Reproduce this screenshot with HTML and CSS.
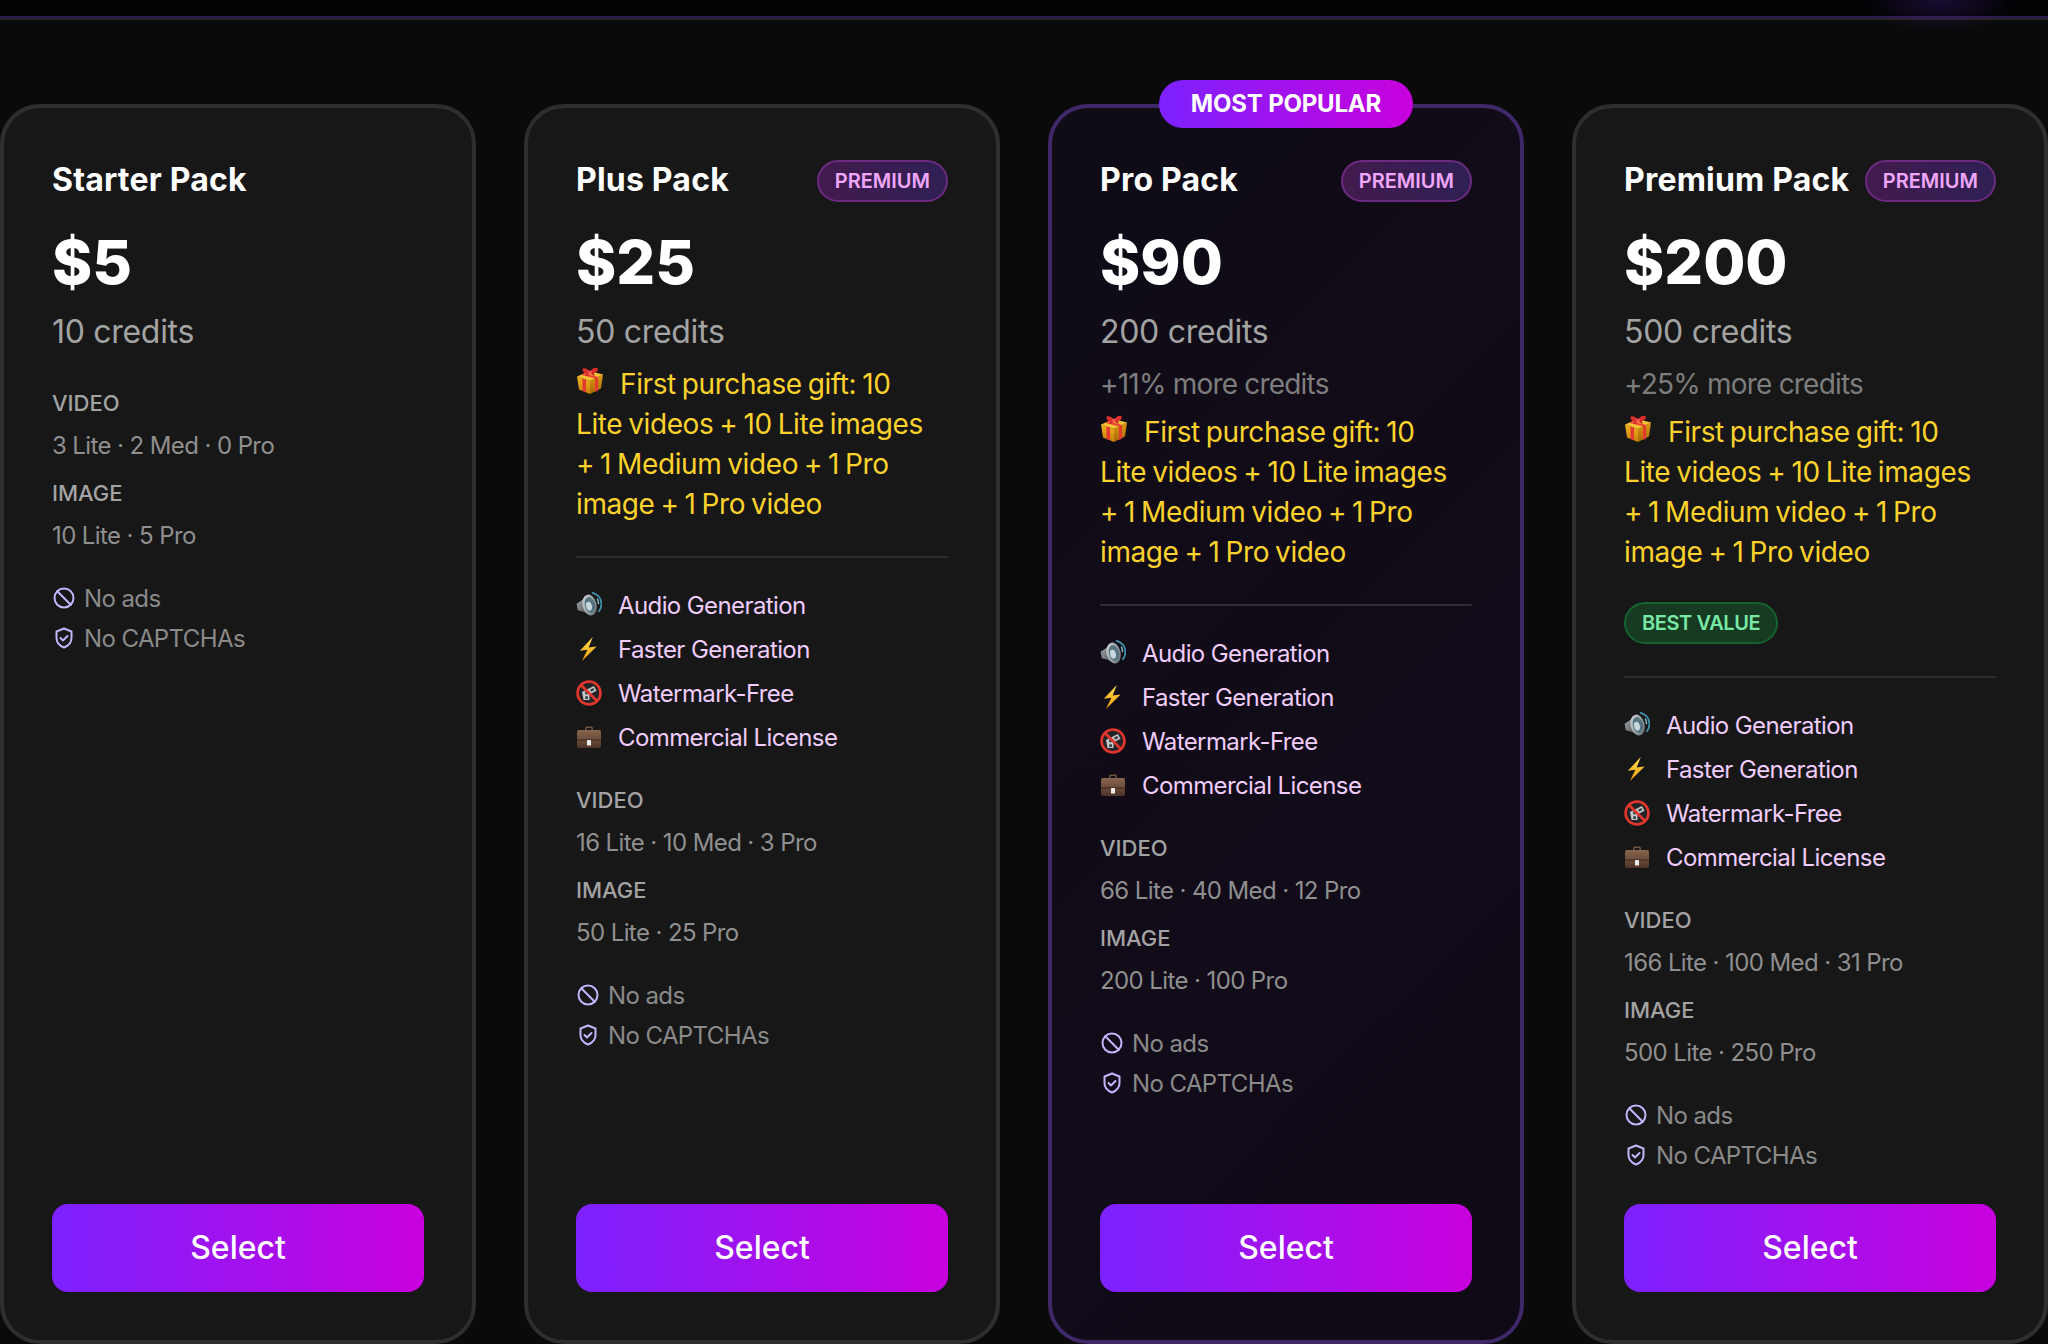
FILE: index.html
```html
<!DOCTYPE html>
<html lang="en">
<head>
  <meta charset="UTF-8" />
  <meta name="viewport" content="width=device-width, initial-scale=1.0"/>
  <title>Credit Packs</title>
  <link rel="stylesheet" href="styles.css">
</head>
<body>
  <svg class="sprites" width="0" height="0" aria-hidden="true">
    <defs>
      <linearGradient id="goldL" x1="0" y1="0" x2="0" y2="1"><stop offset="0" stop-color="#f2b21c"/><stop offset="1" stop-color="#c77f0c"/></linearGradient>
      <linearGradient id="goldR" x1="0" y1="0" x2="0" y2="1"><stop offset="0" stop-color="#dd9a14"/><stop offset="1" stop-color="#a9660a"/></linearGradient>
      <linearGradient id="metal" x1="0" y1="0" x2="1" y2="1"><stop offset="0" stop-color="#a9afb4"/><stop offset="1" stop-color="#3c4145"/></linearGradient>
      <linearGradient id="rim" x1="0" y1="0" x2="1" y2="1"><stop offset="0" stop-color="#d9dde0"/><stop offset="1" stop-color="#5d6468"/></linearGradient>
      <linearGradient id="leather" x1="0" y1="0" x2="0" y2="1"><stop offset="0" stop-color="#8a6650"/><stop offset="1" stop-color="#4d3427"/></linearGradient>
      <linearGradient id="bolt" x1="0" y1="0" x2="0" y2="1"><stop offset="0" stop-color="#ffe14d"/><stop offset="1" stop-color="#f59a0a"/></linearGradient>
    </defs>
    <symbol id="i-gift" viewBox="0 0 28 28">
      <path d="M1 9.500 14 14v13L3 22.500z" fill="url(#goldL)"/>
      <path d="M27 7.500 14 14v13l11-5.500z" fill="url(#goldR)"/>
      <path d="M1 9.500 13.500 4 27 7.500 14 14z" fill="#f6c433"/>
      <path d="M6.500 11.400 10 12.600v12.700l-3.500-1.600zM19 11.600l3-1.600v13.400l-3 1.600z" fill="#e5392f"/>
      <path d="M5 7.700 8.500 6l13.500 4-3 1.600z" fill="#ee4438"/>
      <path d="M14 6.500C10 7 6 5.500 6.500 2.600 7 .4 11.500 1 14 5 16 1 21-.4 21.800 2 22.500 5 18 6.800 14 6.500z" fill="#dd2f2f"/>
      <path d="M14 6.500 9.500 9.600l1.200-3.400zM14 6.500l5 2.400-1.400-3.300z" fill="#b81f27"/>
      <circle cx="14" cy="5.400" r="1.900" fill="#f2574c"/>
    </symbol>
    <symbol id="i-speaker" viewBox="1 1 22 22">
      <path d="M1.500 11 6.500 7.500 12 3 14 21 8 18 2.500 16.500z" fill="url(#metal)"/>
      <ellipse cx="12.500" cy="12" rx="6" ry="9" transform="rotate(-14 12.500 12)" fill="url(#rim)"/>
      <ellipse cx="12.800" cy="12" rx="4.200" ry="6.800" transform="rotate(-14 12.800 12)" fill="#54747f"/>
      <ellipse cx="12" cy="13" rx="2.400" ry="3.800" transform="rotate(-14 12 13)" fill="#c8d8de"/>
      <path d="M14.500 1.500c4.500 1.500 8 5 8 9.500 0 2.500-.8 4.800-2.500 6.800" fill="none" stroke="#3e8fa3" stroke-width="1.500"/>
      <path d="M19 6.500c.8 1.500 1.200 3 1.100 4.800" fill="none" stroke="#7dbccb" stroke-width="1.300"/>
    </symbol>
    <symbol id="i-bolt" viewBox="0 0 24 24">
      <path d="M15.500 1 3.500 13.500l7-.8L5.500 23 19 9.800l-7.300.8z" fill="url(#bolt)"/>
    </symbol>
    <symbol id="i-nocam" viewBox="0 0 24 24">
      <circle cx="12" cy="12" r="10.600" fill="#242426" stroke="#e2352c" stroke-width="2.400"/>
      <path d="M5.500 11 16.500 5.500l2.500 4.500-6.500 3.400v5H7z" fill="#c3c7cb"/>
      <path d="M8 11.200l3-1.500 1.200 2.300-3 1.500zM13 8.800l3-1.500 1 2-3 1.500zM8.500 15h2.500v2.500H8.500z" fill="#3b3f43"/>
      <path d="M4.800 4.800 19.500 19.500" stroke="#e2352c" stroke-width="2.600"/>
    </symbol>
    <symbol id="i-case" viewBox="0 0 26 24">
      <path d="M9 6V3.200C9 2 10 1.500 11 1.500h4c1 0 2 .5 2 1.700V6h-1.600V3.100h-4.800V6z" fill="#6d5140"/>
      <rect x="1" y="5" width="24" height="18" rx="2" fill="url(#leather)"/>
      <path d="M1 14.500h24v1H1z" fill="#3a261b"/>
      <rect x="11" y="15" width="4" height="5.500" rx=".6" fill="#ececec"/>
    </symbol>
    <symbol id="i-ban" viewBox="0 0 24 24">
      <circle cx="12" cy="12" r="9.500"/>
      <path d="m5.300 5.300 13.400 13.400"/>
    </symbol>
    <symbol id="i-shield" viewBox="0 0 24 24">
      <path d="M12 2.500 19.500 5.500v6.500c0 4.500-3.200 7.800-7.500 9.500-4.300-1.700-7.500-5-7.500-9.500V5.500z"/>
      <path d="m8.500 12 2.500 2.500 4.500-4.500"/>
    </symbol>
  </svg>

  <div class="topbar"><div class="glow"></div></div>

  <div class="plans">

    <div class="plan">
      <div class="plan-head"><div class="plan-name">Starter Pack</div></div>
      <div class="plan-price">$5</div>
      <div class="plan-credits">10 credits</div>
      <div class="usage">
        <div class="usage-label">VIDEO</div>
        <div class="usage-value">3 Lite · 2 Med · 0 Pro</div>
        <div class="usage-label">IMAGE</div>
        <div class="usage-value">10 Lite · 5 Pro</div>
      </div>
      <ul class="perks">
        <li><svg class="line-icon"><use href="#i-ban"/></svg>No ads</li>
        <li><svg class="line-icon"><use href="#i-shield"/></svg>No CAPTCHAs</li>
      </ul>
      <a class="select-btn">Select</a>
    </div>

    <div class="plan">
      <div class="plan-head"><div class="plan-name">Plus Pack</div><span class="tag-premium">PREMIUM</span></div>
      <div class="plan-price">$25</div>
      <div class="plan-credits">50 credits</div>
      <div class="gift"><svg class="gift-icon"><use href="#i-gift"/></svg>First purchase gift: 10 Lite videos + 10 Lite images + 1 Medium video + 1 Pro image + 1 Pro video</div>
      <ul class="features">
        <li><svg class="emoji"><use href="#i-speaker"/></svg>Audio Generation</li>
        <li><svg class="emoji"><use href="#i-bolt"/></svg>Faster Generation</li>
        <li><svg class="emoji"><use href="#i-nocam"/></svg>Watermark-Free</li>
        <li><svg class="emoji"><use href="#i-case"/></svg>Commercial License</li>
      </ul>
      <div class="usage">
        <div class="usage-label">VIDEO</div>
        <div class="usage-value">16 Lite · 10 Med · 3 Pro</div>
        <div class="usage-label">IMAGE</div>
        <div class="usage-value">50 Lite · 25 Pro</div>
      </div>
      <ul class="perks">
        <li><svg class="line-icon"><use href="#i-ban"/></svg>No ads</li>
        <li><svg class="line-icon"><use href="#i-shield"/></svg>No CAPTCHAs</li>
      </ul>
      <a class="select-btn">Select</a>
    </div>

    <div class="plan plan-popular">
      <div class="tag-popular">MOST POPULAR</div>
      <div class="plan-head"><div class="plan-name">Pro Pack</div><span class="tag-premium">PREMIUM</span></div>
      <div class="plan-price">$90</div>
      <div class="plan-credits">200 credits</div>
      <div class="plan-bonus">+11% more credits</div>
      <div class="gift"><svg class="gift-icon"><use href="#i-gift"/></svg>First purchase gift: 10 Lite videos + 10 Lite images + 1 Medium video + 1 Pro image + 1 Pro video</div>
      <ul class="features">
        <li><svg class="emoji"><use href="#i-speaker"/></svg>Audio Generation</li>
        <li><svg class="emoji"><use href="#i-bolt"/></svg>Faster Generation</li>
        <li><svg class="emoji"><use href="#i-nocam"/></svg>Watermark-Free</li>
        <li><svg class="emoji"><use href="#i-case"/></svg>Commercial License</li>
      </ul>
      <div class="usage">
        <div class="usage-label">VIDEO</div>
        <div class="usage-value">66 Lite · 40 Med · 12 Pro</div>
        <div class="usage-label">IMAGE</div>
        <div class="usage-value">200 Lite · 100 Pro</div>
      </div>
      <ul class="perks">
        <li><svg class="line-icon"><use href="#i-ban"/></svg>No ads</li>
        <li><svg class="line-icon"><use href="#i-shield"/></svg>No CAPTCHAs</li>
      </ul>
      <a class="select-btn">Select</a>
    </div>

    <div class="plan">
      <div class="plan-head"><div class="plan-name">Premium Pack</div><span class="tag-premium">PREMIUM</span></div>
      <div class="plan-price">$200</div>
      <div class="plan-credits">500 credits</div>
      <div class="plan-bonus">+25% more credits</div>
      <div class="gift"><svg class="gift-icon"><use href="#i-gift"/></svg>First purchase gift: 10 Lite videos + 10 Lite images + 1 Medium video + 1 Pro image + 1 Pro video</div>
      <div class="tag-value">BEST VALUE</div>
      <ul class="features">
        <li><svg class="emoji"><use href="#i-speaker"/></svg>Audio Generation</li>
        <li><svg class="emoji"><use href="#i-bolt"/></svg>Faster Generation</li>
        <li><svg class="emoji"><use href="#i-nocam"/></svg>Watermark-Free</li>
        <li><svg class="emoji"><use href="#i-case"/></svg>Commercial License</li>
      </ul>
      <div class="usage">
        <div class="usage-label">VIDEO</div>
        <div class="usage-value">166 Lite · 100 Med · 31 Pro</div>
        <div class="usage-label">IMAGE</div>
        <div class="usage-value">500 Lite · 250 Pro</div>
      </div>
      <ul class="perks">
        <li><svg class="line-icon"><use href="#i-ban"/></svg>No ads</li>
        <li><svg class="line-icon"><use href="#i-shield"/></svg>No CAPTCHAs</li>
      </ul>
      <a class="select-btn">Select</a>
    </div>

  </div>
</body>
</html>
```

FILE: styles.css
```css
* {
  box-sizing: border-box;
  padding: 0;
  margin: 0;
}

html, body {
  height: 1344px;
  overflow: hidden;
}

body {
  font-family: Inter, "Liberation Sans", sans-serif;
  background-color: #0a0a0a;
  color: #fff;
}

.sprites {
  position: absolute;
}

.topbar {
  position: relative;
  height: 20px;
  background-color: #020202;
  border-bottom: 2px solid #262626;
  box-shadow: inset 0 -2px 0 #2a1a4d;
}

.glow {
  position: absolute;
  top: 0;
  left: 1860px;
  width: 160px;
  height: 32px;
  background: radial-gradient(ellipse at 50% 0, rgba(88, 40, 180, 0.28), rgba(88, 40, 180, 0) 70%);
}

.plans {
  display: grid;
  grid-template-columns: repeat(4, 476px);
  gap: 48px;
  padding-top: 84px;
}

.plan {
  position: relative;
  display: flex;
  flex-direction: column;
  height: 1240px;
  padding: 48px;
  background-color: #171717;
  border: 4px solid #2e2e2e;
  border-radius: 40px;
}

.plan-popular {
  background: linear-gradient(135deg, #0f0c16 0%, #120b19 60%, #100a17 100%);
  border-color: #3f2868;
}

.plan-head {
  display: flex;
  justify-content: space-between;
  align-items: center;
  height: 42px;
  margin-top: 3px;
  margin-bottom: 23px;
}

.plan-name {
  font-size: 32px;
  font-weight: 700;
  letter-spacing: 0.2px;
  line-height: 42px;
  white-space: nowrap;
}

.tag-premium {
  margin-top: 2px;
  padding: 0 16px;
  font-size: 20px;
  font-weight: 600;
  line-height: 38px;
  color: #f0a6fa;
  background: linear-gradient(90deg, #431a4e, #2f2054);
  border: 2px solid #6c2a80;
  border-radius: 999px;
}

.tag-popular {
  position: absolute;
  top: -28px;
  left: 50%;
  transform: translateX(-50%);
  width: 254px;
  height: 48px;
  font-size: 24px;
  font-weight: 700;
  letter-spacing: -0.2px;
  line-height: 48px;
  text-align: center;
  white-space: nowrap;
  background: linear-gradient(90deg, #7c22ff, #c800dc);
  border-radius: 999px;
}

.plan-price {
  font-size: 61px;
  font-weight: 800;
  line-height: 76px;
  margin-bottom: 8px;
}

.plan-credits {
  font-size: 32px;
  letter-spacing: -0.3px;
  line-height: 48px;
  color: #a3a3a3;
}

.plan-bonus {
  margin-top: 8px;
  font-size: 28px;
  letter-spacing: -0.8px;
  line-height: 40px;
  color: #7d7d7d;
}

.gift {
  margin-top: 8px;
  padding-right: 12px;
  font-size: 28px;
  letter-spacing: -0.4px;
  word-spacing: -1.5px;
  line-height: 40px;
  color: #fcd22c;
}

.gift-icon {
  width: 28px;
  height: 28px;
  margin-right: 16px;
  vertical-align: -1px;
}

.tag-value {
  align-self: flex-start;
  margin-top: 30px;
  padding: 0 16px;
  font-size: 20px;
  font-weight: 600;
  letter-spacing: -0.4px;
  line-height: 38px;
  color: #78e8a4;
  background-color: #163a22;
  border: 2px solid #14632e;
  border-radius: 999px;
}

.features {
  list-style: none;
  margin-top: 32px;
  padding-top: 25px;
  border-top: 2px solid #2e2e2e;
}

.features li {
  display: flex;
  align-items: center;
  height: 44px;
  font-size: 24px;
  letter-spacing: -0.6px;
  color: #f0cdfb;
}

.emoji {
  flex: none;
  width: 26px;
  height: 26px;
  margin-right: 16px;
}

.usage {
  margin-top: 31px;
}

.features + .usage {
  margin-top: 25px;
}

.usage-label {
  font-size: 22px;
  font-weight: 500;
  line-height: 32px;
  color: #a3a3a3;
}

.usage-value {
  font-size: 24px;
  letter-spacing: -0.6px;
  line-height: 32px;
  margin: 11px 0 15px;
  color: #8f8f8f;
}

.perks {
  list-style: none;
  margin-top: 11px;
}

.perks li {
  display: flex;
  align-items: center;
  height: 40px;
  font-size: 24px;
  letter-spacing: -0.6px;
  color: #8a8a8a;
}

.line-icon {
  flex: none;
  width: 24px;
  height: 24px;
  margin-right: 8px;
  fill: none;
  stroke: #c4b5fd;
  stroke-width: 2;
  stroke-linecap: round;
  stroke-linejoin: round;
}

.select-btn {
  display: block;
  margin-top: auto;
  height: 88px;
  font-size: 32px;
  font-weight: 500;
  line-height: 88px;
  text-align: center;
  color: #fff;
  background: linear-gradient(90deg, #7c22ff, #c800dc);
  border-radius: 16px;
}
```
